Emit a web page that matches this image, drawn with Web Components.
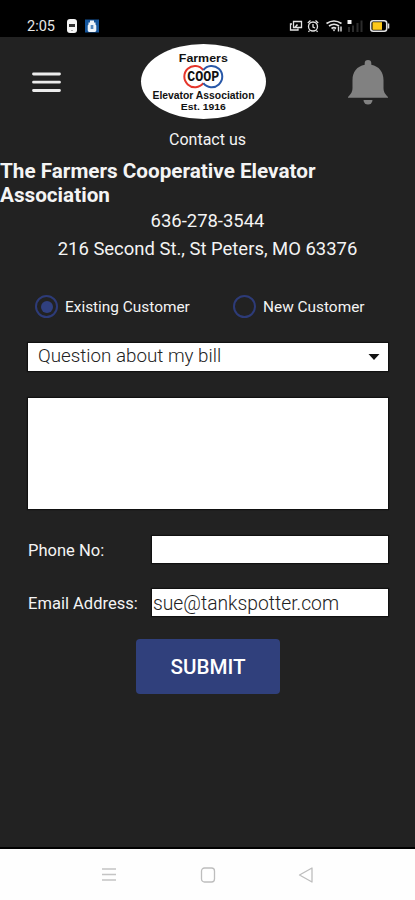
<!DOCTYPE html>
<html lang="en">
<head>
<meta charset="utf-8">
<title>Contact us</title>
<style>
  body {
    background: #222;
    color: #f4f4f4;
    font-family: Roboto, sans-serif;
    margin: 0;
  }
</style>
</head>
<body>
<contact-app>
  <status-bar slot="status">2:05</status-bar>
  <app-header slot="header"></app-header>
  <company-info slot="info">
    <span slot="page">Contact us</span>
    <span slot="name">The Farmers Cooperative Elevator Association</span>
    <span slot="phone">636-278-3544</span>
    <span slot="address">216 Second St., St Peters, MO 63376</span>
  </company-info>
  <contact-form slot="form"></contact-form>
  <nav-bar slot="nav"></nav-bar>
</contact-app>

<script>
const define = (name, content) => {
  customElements.define(name, class extends HTMLElement {
    constructor() {
      super();
      this.attachShadow({ mode: "open" });
      this.shadowRoot.innerHTML = content;
    }
  });
};

define("contact-app", `
  <style>
    :host {
      box-sizing: border-box;
      display: flex;
      flex-direction: column;
      height: 900px;
      overflow: hidden;
      width: 415px;
    }

    main {
      flex: 1;
    }
  </style>

  <slot name="status"></slot>
  <slot name="header"></slot>
  <main>
    <slot name="info"></slot>
    <slot name="form"></slot>
  </main>
  <slot name="nav"></slot>
`);

define("status-bar", `
  <style>
    :host {
      align-items: center;
      background: #000;
      box-sizing: border-box;
      color: #e6e6e6;
      display: flex;
      flex: none;
      font-size: 14.5px;
      height: 37px;
      line-height: 20px;
      padding: 15px 25px 0 27px;
    }

    .time {
      padding-top: 1px;
      width: 39px;
    }

    svg {
      display: block;
    }

    .right {
      margin-left: auto;
    }
  </style>

  <span class="time"><slot></slot></span>
  <svg width="34" height="16" viewBox="0 0 34 16">
    <rect x="1" y="1" width="10" height="14" rx="3" fill="#f4f4f4"/>
    <path d="M3 6h6v3H3z" fill="#333"/>
    <path d="M5 12.500h2" stroke="#aaa"/>
    <rect x="19" y="1.500" width="14" height="13" fill="#14559c"/>
    <path d="M24 2.500h4v2h1.500v2l.8 1v5l-1 1.500h-6.600l-1-1.500v-5l.8-1v-2H24z" fill="#eef4fa"/>
    <path d="M24.500 7h3v4h-3z" fill="#7fa9d4"/>
    <path d="M26 7v4" stroke="#14559c" stroke-width=".8"/>
  </svg>
  <svg class="right" width="101" height="16" viewBox="0 0 101 16" fill="none" stroke="#e2e2e2" stroke-width="1.300">
    <path d="M4.500 3.500h8v6h-8zM3 6H1.500v6H9v-1.500"/>
    <path d="M6 9.500l2.500-3" stroke-width="1.600"/>
    <circle cx="24" cy="8.500" r="4.500"/>
    <path d="M24 6v3l2 1M18.800 5l2.700-2.500M29.200 5l-2.700-2.500M20.500 12.500l-1 1.500M27.500 12.500l1 1.500"/>
    <path d="M37.500 5.500q7.500-5 15 0M40 8q5-3.500 10 0M42.500 10.500q2.500-1.600 4.500 0" stroke-width="1.700"/>
    <path d="M43.500 11.500h3l-1.500 2z" fill="#e2e2e2" stroke="none"/>
    <path d="M49.500 8.500v5M52 8.500v5" stroke-width="1.400"/>
    <path d="M60 9v5M64 7.500V14M68.500 5v9M72.500 2.500V14" stroke="#2c2c2c" stroke-width="2"/>
    <path d="M58.500 2h4v4h-4z" fill="#f2f2f2" stroke="none"/>
    <rect x="81.700" y="2.700" width="16" height="10.600" rx="2.500" stroke-width="1.500"/>
    <path d="M83.500 4.200h9.500v7.600h-9.500z" fill="#fdc91a" stroke="none"/>
    <path d="M99.500 5.500v5" stroke-width="1.600"/>
  </svg>
`);

define("coop-logo", `
  <style>
    :host {
      display: block;
      height: 77px;
      width: 127px;
    }

    svg {
      display: block;
    }

    text {
      fill: #111;
      font-family: "Liberation Sans", sans-serif;
      font-weight: bold;
      text-anchor: middle;
    }

    .coop {
      font-family: "Liberation Mono", monospace;
    }
  </style>

  <svg width="127" height="77" viewBox="0 0 127 77">
    <ellipse cx="63.500" cy="38.500" rx="62.500" ry="37.500" fill="#fff"/>
    <g fill="none" stroke-width="2">
      <path d="M63.300 27.100A10.600 10.600 0 1 0 63.300 40.100" stroke="#e5352b"/>
      <path d="M63.300 27.100A10.600 10.600 0 1 1 63.300 40.100" stroke="#2858a8"/>
    </g>
    <text x="63.300" y="19" font-size="11.500" textLength="49" lengthAdjust="spacingAndGlyphs">Farmers</text>
    <text class="coop" x="63.300" y="38.300" font-size="14.500" textLength="32" lengthAdjust="spacingAndGlyphs">COOP</text>
    <text x="63.500" y="56" font-size="10" textLength="102" lengthAdjust="spacingAndGlyphs">Elevator Association</text>
    <text x="63.300" y="66.500" font-size="8.800" textLength="45" lengthAdjust="spacingAndGlyphs">Est. 1916</text>
  </svg>
`);

define("app-header", `
  <style>
    :host {
      align-items: center;
      box-sizing: border-box;
      display: grid;
      flex: none;
      grid-template-columns: 28px 127px 40px;
      height: 91px;
      justify-content: space-between;
      padding: 0 27px 2px 32px;
    }

    coop-logo {
      margin-left: -1px;
    }

    svg {
      display: block;
    }
  </style>

  <svg width="29" height="24" viewBox="0 0 29 24">
    <path d="M1.500 4h26M1.500 12.200h26M1.500 20.500h26" stroke="#ececec" stroke-width="2.800" stroke-linecap="round"/>
  </svg>
  <coop-logo></coop-logo>
  <svg width="40" height="46" viewBox="0 0 40 46" fill="#818181">
    <path d="M20 1a3.300 3.300 0 0 0-3.300 3.300v1.500C9 7.300 4.500 13 4.500 21v7.500c0 4-1 6-4.500 9.500v.8h40V38c-3.500-3.500-4.500-5.500-4.500-9.500V21c0-8-4.500-13.700-12.200-15.200V4.300A3.300 3.300 0 0 0 20 1z"/>
    <path d="M15.500 41h9a4.500 4.500 0 0 1-9 0z"/>
  </svg>
`);

define("company-info", `
  <style>
    :host {
      display: block;
      text-align: center;
    }

    p,
    h1 {
      margin: 0;
    }

    .page {
      font-size: 16px;
      line-height: 24px;
    }

    h1 {
      font-size: 20.7px;
      line-height: 24px;
      margin: 7px 0 0;
      text-align: left;
    }

    .detail {
      font-size: 18.45px;
      line-height: 28px;
    }
  </style>

  <p class="page"><slot name="page"></slot></p>
  <h1><slot name="name"></slot></h1>
  <p class="detail"><slot name="phone"></slot></p>
  <p class="detail"><slot name="address"></slot></p>
`);

define("radio-option", `
  <style>
    :host {
      align-items: center;
      display: flex;
      font-size: 15.4px;
      gap: 7px;
      line-height: 24px;
      white-space: nowrap;
    }

    i {
      border: 2px solid #2d3b78;
      border-radius: 50%;
      box-sizing: border-box;
      display: grid;
      height: 23px;
      place-items: center;
      width: 23px;
    }

    span {
      padding-top: 1px;
    }

    :host([checked]) i::before {
      background: #30407f;
      border-radius: 50%;
      content: "";
      height: 12px;
      width: 12px;
    }
  </style>

  <i></i><span><slot></slot></span>
`);

define("text-box", `
  <style>
    :host {
      align-items: center;
      background: #fff;
      box-shadow: 0 0 1px 1px #111;
      box-sizing: border-box;
      color: #222;
      display: flex;
      font-size: 19.3px;
      font-weight: 300;
      justify-content: space-between;
      line-height: 24px;
      white-space: nowrap;
    }
  </style>

  <slot></slot>
`);

define("submit-button", `
  <style>
    :host {
      background: #30407c;
      border-radius: 4px;
      color: #fff;
      display: block;
      font-size: 20.6px;
      font-weight: 500;
      height: 55px;
      line-height: 57px;
      margin: 23px auto 0;
      text-align: center;
      width: 144px;
    }
  </style>

  <slot></slot>
`);

define("contact-form", `
  <style>
    :host {
      display: block;
      padding: 31px 27px 0 28px;
    }

    .radios {
      display: grid;
      grid-template-columns: 198px 1fr;
      padding-left: 7px;
    }

    .select {
      font-size: 18.8px;
      height: 28px;
      margin-top: 24px;
      padding: 0 8px 2px 10px;
    }

    .select svg {
      margin-top: 2px;
    }

    .message {
      height: 111px;
      margin-top: 27px;
    }

    .row {
      align-items: center;
      display: grid;
      font-size: 16.55px;
      grid-template-columns: 124px 1fr;
      line-height: 20px;
      margin-top: 26px;
    }

    .message + .row {
      margin-top: 27px;
    }

    .row text-box {
      height: 27px;
      padding: 2px 0 0 1px;
    }

    label {
      padding-top: 3px;
      white-space: nowrap;
    }
  </style>

  <div class="radios">
    <radio-option checked>Existing Customer</radio-option>
    <radio-option>New Customer</radio-option>
  </div>
  <text-box class="select">
    <span>Question about my bill</span>
    <svg width="12" height="6" viewBox="0 0 12 6"><path d="M.5 0h11L6 6z" fill="#111"/></svg>
  </text-box>
  <text-box class="message"></text-box>
  <div class="row"><label>Phone No:</label><text-box></text-box></div>
  <div class="row"><label>Email Address:</label><text-box>sue@tankspotter.com</text-box></div>
  <submit-button>SUBMIT</submit-button>
`);

define("nav-bar", `
  <style>
    :host {
      align-items: center;
      background: #fefefe;
      border-top: 2px solid #000;
      box-sizing: border-box;
      display: flex;
      flex: none;
      height: 53px;
      justify-content: space-between;
      padding: 1px 101px 0 101px;
    }

    svg {
      display: block;
    }
  </style>

  <svg width="16" height="16" viewBox="0 0 16 16"><path d="M1 2h14M1 7.500h14M1 13h14" stroke="#c4c4c4" stroke-width="1.300"/></svg>
  <svg width="16" height="16" viewBox="0 0 16 16"><rect x="1.500" y="1" width="13" height="14" rx="3" fill="none" stroke="#bdbdbd" stroke-width="1.300"/></svg>
  <svg width="16" height="16" viewBox="0 0 16 16"><path d="M14 1v14L1.500 8z" fill="none" stroke="#bdbdbd" stroke-width="1.300" stroke-linejoin="round"/></svg>
`);
</script>
</body>
</html>
